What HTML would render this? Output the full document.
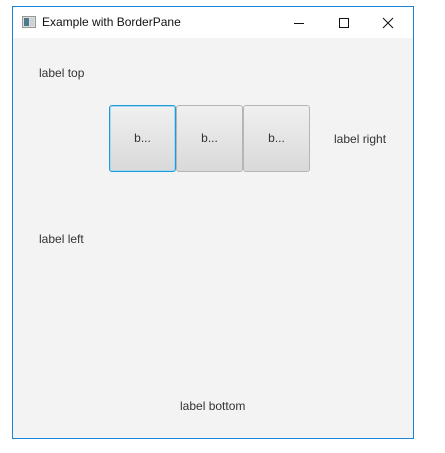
<!DOCTYPE html>
<html><head><style>
body{margin:0;width:445px;height:453px;background:#fff;position:relative;overflow:hidden;font-family:"Liberation Sans",sans-serif;font-size:12px;color:#333}
.win{position:absolute;left:12px;top:6px;width:400px;height:431px;border:1px solid #1883d7;background:#f3f3f3}
.tb{position:absolute;left:0;top:0;width:400px;height:31px;background:#fff}
.t{position:absolute;white-space:nowrap}
.btn{position:absolute;top:98px;height:67px;width:67px;border:1px solid #b5b5b5;border-radius:3px;background:linear-gradient(#f0f0f0,#d9d9d9);box-sizing:border-box;text-align:center;line-height:65px;color:#333}
</style></head><body>
<div class="win">
<div class="tb">
<svg style="position:absolute;left:9px;top:9px" width="14" height="12"><rect x="0.5" y="0.5" width="13" height="11" fill="#ddd" stroke="#999"/><rect x="2" y="2" width="5" height="8" fill="#4a7a8c"/><rect x="8" y="2" width="4" height="8" fill="#c8d4d8"/></svg>
<div class="t" style="left:29px;top:8px;color:#111">Example with BorderPane</div>
<svg style="position:absolute;left:280px;top:9px" width="120" height="14"><line x1="1" y1="7.5" x2="11" y2="7.5" stroke="#111"/><rect x="46.5" y="2.5" width="9" height="9" fill="none" stroke="#111"/><path d="M90 2 L100 12 M100 2 L90 12" stroke="#111"/></svg>
</div>
<div class="t" style="left:26px;top:59px">label top</div>
<div class="btn" style="left:96px;border:1px solid #1c9bd8;box-shadow:inset 0 0 0 1px #a8d8f0">b...</div>
<div class="btn" style="left:163px">b...</div>
<div class="btn" style="left:230px">b...</div>
<div class="t" style="left:321px;top:125px">label right</div>
<div class="t" style="left:26px;top:225px">label left</div>
<div class="t" style="left:167px;top:392px">label bottom</div>
</div>
</body></html>
